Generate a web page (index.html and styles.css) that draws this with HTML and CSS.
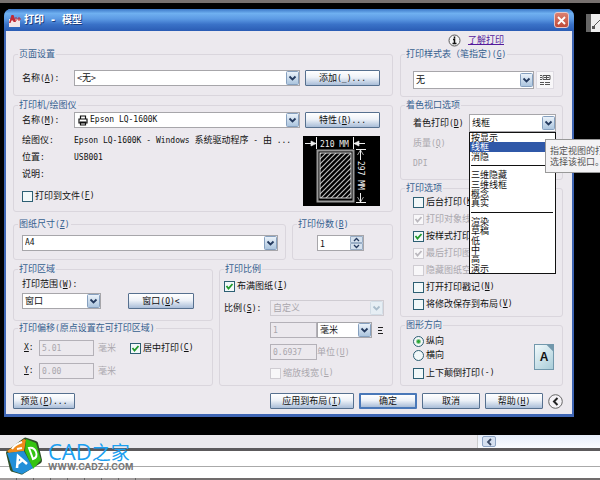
FILE: index.html
```
<!DOCTYPE html>
<html lang="zh-CN">
<head>
<meta charset="utf-8">
<title>打印 - 模型</title>
<link rel="stylesheet" href="styles.css">
</head>
<body>
<main class="canvas">
  <section class="dialog" aria-label="打印">
    <header class="titlebar">
      <svg class="app-icon" width="13" height="13" viewBox="0 0 13 13" aria-hidden="true">
        <path d="M1 5h11v8H1z" fill="#f4e6e8"/>
        <path d="M1 9 3.500 1h2L8 8H5.500L5 6.500H3.500L2.500 9z" fill="#c22a35"/>
        <path d="M7 4h2M7 6h2M10 4h2v2h-2z" stroke="#c22a35" fill="none"/>
      </svg>
      <h1>打印 - 模型</h1>
      <button class="close" aria-label="关闭"><svg width="9" height="9" viewBox="0 0 9 9"><path d="M1 1l7 7M8 1 1 8" stroke="#fff" stroke-width="1.800"/></svg></button>
    </header>
    <div class="body">
      <div class="help">
        <svg width="13" height="13" viewBox="0 0 13 13" aria-hidden="true"><circle cx="6.500" cy="6.500" r="5.500" fill="#f4f4f6" stroke="#555"/><path d="M6.500 2.500v2M5 5.500h1.500v4M4.500 9.500h4" stroke="#111" stroke-width="1.500" fill="none"/></svg>
        <a href="#">了解打印</a>
      </div>
      <div class="columns">
        <div class="left">
          <fieldset class="page-setup">
            <legend>页面设置</legend>
            <div class="line">
              <label class="cap" for="setup">名称<span class="m">(<u>A</u>):</span></label>
              <select id="setup" class="grow"><option>&lt;无&gt;</option></select>
              <button class="side">添加<span class="m">(_)...</span></button>
            </div>
          </fieldset>

          <fieldset class="printer">
            <legend>打印机/绘图仪</legend>
            <div class="line">
              <label class="cap" for="device">名称<span class="m">(<u>M</u>):</span></label>
              <select id="device" class="grow device"><option>Epson LQ-1600K</option></select>
              <button class="side">特性<span class="m">(<u>R</u>)...</span></button>
            </div>
            <div class="printer-info">
              <div>
                <dl>
                  <dt>绘图仪<span class="m">:</span></dt><dd><span class="m">Epson LQ-1600K - Windows </span>系统驱动程序<span class="m"> - </span>由<span class="m"> ...</span></dd>
                  <dt>位置<span class="m">:</span></dt><dd><span class="m">USB001</span></dd>
                  <dt>说明<span class="m">:</span></dt><dd></dd>
                </dl>
                <label class="check"><input type="checkbox">打印到文件<span class="m">(<u>F</u>)</span></label>
              </div>
              <svg class="preview" width="77" height="70" viewBox="0 0 77 70" role="img" aria-label="210 MM x 297 MM">
                <defs><pattern id="hatch" width="5" height="5" patternUnits="userSpaceOnUse"><path d="M-1 6 6-1M-1 1 1-1M4 6 6 4" stroke="#bbb" stroke-width="1.200"/></pattern></defs>
                <rect width="77" height="70" fill="#000"/>
                <rect x="14.500" y="14.500" width="36" height="51" fill="#000" stroke="#999" stroke-width="2"/>
                <rect x="17" y="17" width="31" height="45" fill="url(#hatch)" stroke="#ddd"/>
                <path d="M13.500 1v12M50.500 1v12M2 7.500h11M51 7.500h11M53 13.500h10M53 66.500h10M57.500 14v10M57.500 57v9" stroke="#eee" fill="none"/>
                <path d="M13 7.500 8 5v5zM51 7.500 56 5v5zM57.500 14l-3 5M57.500 14l3 5M57.500 66l-3-5M57.500 66l3-5" fill="#eee" stroke="#eee" stroke-width=".7"/>
                <text x="17" y="11">210 MM</text>
                <text transform="translate(55 25) rotate(90)" x="0" y="0">297 MM</text>
              </svg>
            </div>
          </fieldset>

          <div class="pair paper-row">
            <fieldset class="grow">
              <legend>图纸尺寸<span class="m">(<u>Z</u>)</span></legend>
              <div class="line"><select class="grow mono" aria-label="图纸尺寸"><option>A4</option></select></div>
            </fieldset>
            <fieldset class="copies">
              <legend>打印份数<span class="m">(<u>B</u>)</span></legend>
              <input type="number" value="1" aria-label="打印份数">
            </fieldset>
          </div>

          <div class="pair area-row">
            <div class="stack grow">
              <fieldset class="area">
                <legend>打印区域</legend>
                <label class="row-label" for="range">打印范围<span class="m">(<u>W</u>):</span></label>
                <div class="line split">
                  <select id="range" class="range"><option>窗口</option></select>
                  <button class="pick">窗口<span class="m">(<u>O</u>)&lt;</span></button>
                </div>
              </fieldset>
              <fieldset class="offset">
                <legend>打印偏移<span class="m">(</span>原点设置在可打印区域<span class="m">)</span></legend>
                <div class="line">
                  <label class="axis m" for="ox"><u>X</u>:</label><input id="ox" class="num" value="5.01" disabled>
                  <span class="unit off">毫米</span>
                  <label class="check"><input type="checkbox" checked>居中打印<span class="m">(<u>C</u>)</span></label>
                </div>
                <div class="line">
                  <label class="axis m" for="oy"><u>Y</u>:</label><input id="oy" class="num" value="0.00" disabled>
                  <span class="unit off">毫米</span>
                </div>
              </fieldset>
            </div>
            <fieldset class="scale">
              <legend>打印比例</legend>
              <label class="check"><input type="checkbox" checked>布满图纸<span class="m">(<u>I</u>)</span></label>
              <div class="scale-grid">
                <label for="ratio">比例<span class="m">(<u>S</u>):</span></label>
                <select id="ratio" class="wide" disabled><option>自定义</option></select>
                <input class="num c2" value="1" aria-label="图纸单位" disabled>
                <span class="line"><select class="mm" aria-label="单位"><option>毫米</option></select><svg width="7" height="9" viewBox="0 0 7 9" aria-hidden="true"><path d="M1 1.500h5M1 4.500h4M1 7.500h5" stroke="#222"/></svg></span>
                <input id="du" class="num c2" value="0.6937" disabled>
                <label class="off" for="du">单位<span class="m">(<u>U</u>)</span></label>
                <label class="check off c2 span"><input type="checkbox" disabled>缩放线宽<span class="m">(<u>L</u>)</span></label>
              </div>
            </fieldset>
          </div>
        </div>

        <div class="right">
          <fieldset class="styles">
            <legend>打印样式表（笔指定<span class="m">)(<u>G</u>)</span></legend>
            <div class="line">
              <select class="grow tall" aria-label="打印样式表"><option>无</option></select>
              <button class="edit" aria-label="编辑"><svg width="12" height="12" viewBox="0 0 12 12"><path d="M1 1.500h2M4 1.500h7v4H4zM1 3.500h2M5 3.500h5M1 5.500h2M1 8.500h4M6 8.500h5M1 10.500h4M6 10.500h5M7.500 1v5" stroke="#555" fill="none"/></svg></button>
            </div>
          </fieldset>

          <fieldset class="shade">
            <legend>着色视口选项</legend>
            <div class="shade-grid">
              <label for="shadeplot">着色打印<span class="m">(<u>D</u>)</span></label>
              <div class="picker">
                <select id="shadeplot" class="tall"><option>线框</option></select>
                <ul class="menu">
                  <li>按显示</li><li class="sel">线框</li><li>消隐</li><li class="sep"></li>
                  <li>三维隐藏</li><li>三维线框</li><li>概念</li><li>真实</li><li class="sep"></li>
                  <li>渲染</li><li>草稿</li><li>低</li><li>中</li><li>高</li><li>演示</li>
                </ul>
              </div>
              <span class="off">质量<span class="m">(<u>Q</u>)</span></span>
              <span class="off m">DPI</span>
            </div>
          </fieldset>

          <fieldset class="options">
            <legend>打印选项</legend>
            <div class="option-list">
              <label class="check"><input type="checkbox">后台打印<span class="m">(<u>K</u>)</span></label>
              <label class="check off"><input type="checkbox" checked disabled>打印对象线宽</label>
              <label class="check"><input type="checkbox" checked>按样式打印<span class="m">(<u>E</u>)</span></label>
              <label class="check off"><input type="checkbox" checked disabled>最后打印图纸空间</label>
              <label class="check off"><input type="checkbox" disabled>隐藏图纸空间对象<span class="m">(<u>J</u>)</span></label>
              <label class="check"><input type="checkbox">打开打印戳记<span class="m">(<u>N</u>)</span></label>
              <label class="check"><input type="checkbox">将修改保存到布局<span class="m">(<u>V</u>)</span></label>
            </div>
          </fieldset>

          <fieldset class="orient">
            <legend>图形方向</legend>
            <div class="line split">
              <div>
                <label class="check"><input type="radio" name="o" checked>纵向</label>
                <label class="check"><input type="radio" name="o">横向</label>
                <label class="check flip"><input type="checkbox">上下颠倒打印<span class="m">(-)</span></label>
              </div>
              <div class="sheet">A</div>
            </div>
          </fieldset>
        </div>
      </div>

      <footer class="actions">
        <button class="w62">预览<span class="m">(<u>P</u>)...</span></button>
        <span class="grow"></span>
        <button class="w84">应用到布局<span class="m">(<u>T</u>)</span></button>
        <button class="w58 main">确定</button>
        <button class="w58">取消</button>
        <button class="w58">帮助<span class="m">(<u>H</u>)</span></button>
        <button class="less" aria-label="收起"><svg width="15" height="15" viewBox="0 0 15 15"><circle cx="7.500" cy="7.500" r="6.800" fill="#f4f2f6" stroke="#666"/><path d="M9.500 4 6 7.500 9.500 11" stroke="#222" stroke-width="2" fill="none"/></svg></button>
      </footer>
    </div>
  </section>
  <div class="tooltip">指定视图的打<br>选择该视口。</div>
  <div class="palette"><svg width="9" height="18" viewBox="0 0 9 18" aria-hidden="true"><path d="M1 14 9 6" stroke="#555"/><rect x="1" y="12" width="3" height="3" fill="#555"/></svg></div>
</main>

<div class="scroll">
  <span class="tabs"></span>
  <div class="track"><button aria-label="向左"><svg width="7" height="8" viewBox="0 0 7 8"><path d="M5 1 2 4l3 3" stroke="#3b4a66" stroke-width="1.800" fill="none"/></svg></button></div>
</div>
<div class="history"></div>
<div class="command"></div>
<div class="status"></div>

<div class="brand">
  <svg width="38" height="39" viewBox="0 0 38 39" aria-hidden="true">
    <path d="M1 16Q1 14 3 13L19 1q1-1 3 0l9 3q2 1 2 2l4 17q0 2-1 3L18 37q-1 1-3 0L8 35q-2 0-3-2z" fill="#2f4f2a"/>
    <path d="M2 14 19 2l2 1-2 11L4 16z" fill="#f08a1c"/>
    <path d="M21 2l10 4 5 17-8 9-8-18z" fill="#35c412"/>
    <path d="M2 16l17-2 9 17-11 6-9-3z" fill="#218fd8"/>
    <path d="M17 5q-8 3-10 7M17 11l-5 1" stroke="#fff" stroke-width="2" fill="none"/>
    <path d="M24 11l4 11q5-2 3-7-2-5-7-4z" stroke="#fff" stroke-width="2" fill="none"/>
    <path d="M12 31l1-12 9 8M12.500 27l5-4" stroke="#fff" stroke-width="2.500" fill="none"/>
  </svg>
  <div><div class="name">CAD<span>之家</span></div><div class="url">WWW.CADZJ.COM</div></div>
</div>
</body>
</html>
```
FILE: styles.css
```
* { box-sizing: border-box; }

body {
  margin: 0;
  min-height: 100vh;
  display: flex;
  flex-direction: column;
  position: relative;
  overflow: hidden;
  background: #fff;
  color: #111;
  font: 9px/14px "Noto Sans CJK SC", sans-serif;
}

button, select, input { font: inherit; color: inherit; margin: 0; }
button { padding: 0; }
.m, .mono, .num { font-family: "DejaVu Sans Mono", "Noto Sans CJK SC", monospace; font-size: 8px; }
.grow { flex: 1; min-width: 0; }
.line { display: flex; align-items: center; }
.split { justify-content: space-between; }

/* Drawing area */
.canvas {
  flex: 1;
  position: relative;
  background: #000;
  border-top: 3px solid #77716f;
  padding: 6px 26px 18px 4px;
}

.dialog {
  background: #ece9ee;
  border: solid #3f66b4;
  border-width: 0 2px 3px;
  border-radius: 7px 7px 0 0;
}

.titlebar {
  display: flex;
  align-items: center;
  gap: 3px;
  height: 22px;
  margin: 0 -2px;
  padding: 0 5px 0 4px;
  border-radius: 7px 7px 0 0;
  background: linear-gradient(#3c78c8, #6fb0f0 20%, #5c9ae4 45%, #3a72c8 70%, #2a5cb4);
}
.titlebar h1 {
  flex: 1;
  margin: 0;
  color: #fff;
  font: bold 10px/20px "DejaVu Sans Mono", "Noto Sans CJK SC", monospace;
  text-shadow: 1px 1px #1c3f80;
}
.close {
  display: grid;
  place-items: center;
  width: 15px;
  height: 16px;
  border: 1px solid #e8c8c8;
  border-radius: 3px;
  background: linear-gradient(#dd8070, #c04a38);
}

.body { padding: 0 9px 5px 7px; }

.help {
  display: flex;
  align-items: center;
  justify-content: flex-end;
  gap: 7px;
  height: 16px;
  padding: 2px 59px 0 0;
}
.help a { color: #551a9b; }

.columns { display: flex; gap: 7px; }
.left { flex: 1; min-width: 0; display: flex; flex-direction: column; gap: 2px; }
.right { width: 163px; display: flex; flex-direction: column; gap: 1px; }
.stack { display: flex; flex-direction: column; }
.pair { display: flex; gap: 6px; }

/* Groups */
fieldset {
  min-width: 0;
  margin: 0;
  padding: 0 12px 0 8px;
  border: 1px solid #dad6dd;
  border-radius: 3px;
}
legend { margin-left: -4px; padding: 0 1px; color: #35608f; white-space: nowrap; }

.page-setup { padding-top: 9px; padding-bottom: 9px; }
.cap { width: 52px; }

select, .num, .copies input {
  appearance: none;
  min-width: 0;
  height: 16px;
  padding: 0 14px 0 2px;
  border: 1px solid #a7a6aa;
  border-radius: 0;
  outline: 0;
  background: #fff;
  line-height: 14px;
}
select {
  background: url("data:image/svg+xml,%3Csvg xmlns='http://www.w3.org/2000/svg' viewBox='0 0 13 14'%3E%3Cdefs%3E%3ClinearGradient id='g' x2='0' y2='1'%3E%3Cstop stop-color='%23edf4fb'/%3E%3Cstop offset='1' stop-color='%23a9c3dd'/%3E%3C/linearGradient%3E%3C/defs%3E%3Crect x='.5' y='.5' width='12' height='13' rx='1' fill='url(%23g)' stroke='%2386a0bf'/%3E%3Cpath d='M3.500 5.500l3 3 3-3' fill='none' stroke='%23243a5e' stroke-width='1.800'/%3E%3C/svg%3E") right 0 center / 13px 14px no-repeat #fff;
}
select.tall { height: 18px; }
select:disabled {
  color: #a9a6ac;
  border-color: #cfccd2;
  opacity: 1;
  background-color: #ece9ee;
  background-image: url("data:image/svg+xml,%3Csvg xmlns='http://www.w3.org/2000/svg' viewBox='0 0 13 14'%3E%3Crect x='.5' y='.5' width='12' height='13' rx='1' fill='%23e6eef4' stroke='%23d2dde6'/%3E%3Cpath d='M3.500 5.500l3 3 3-3' fill='none' stroke='%23a9bccb' stroke-width='1.800'/%3E%3C/svg%3E");
}
.num { padding: 0 2px; }
.num:disabled { background: #ece9ee; color: #a9a6ac; border-color: #b4b1b8; }

.side, .pick, .actions button {
  height: 16px;
  border: 1px solid #56708f;
  border-radius: 1px;
  background: linear-gradient(#fff, #eef2f8 45%, #a9bdd8);
  line-height: 12px;
  white-space: nowrap;
}
.side { width: 75px; margin-left: 5px; }

.off { color: #aaa7ad; }

/* Tick boxes */
.check { display: flex; align-items: center; height: 14px; white-space: nowrap; }
.check input {
  appearance: none;
  flex: none;
  width: 11px;
  height: 11px;
  margin-right: 2px;
  border: 1px solid #2d5f73;
  background: center / 9px 9px no-repeat #f2f8f9;
}
.check input:disabled { border-color: #cfccd2; background-color: #f8f7f9; }
.check input[type=checkbox]:checked {
  background-image: url("data:image/svg+xml,%3Csvg xmlns='http://www.w3.org/2000/svg' viewBox='0 0 9 9'%3E%3Cpath d='M1.500 4l2 2.500 4-4.500' fill='none' stroke='%23219a2b' stroke-width='1.800'/%3E%3C/svg%3E");
}
.check input[type=checkbox]:checked:disabled {
  background-image: url("data:image/svg+xml,%3Csvg xmlns='http://www.w3.org/2000/svg' viewBox='0 0 9 9'%3E%3Cpath d='M1.500 4l2 2.500 4-4.500' fill='none' stroke='%23bbb8be' stroke-width='1.800'/%3E%3C/svg%3E");
}
.check input[type=radio] { border-radius: 50%; }
.check input[type=radio]:checked { background: radial-gradient(circle, #2ba436 0 1px, #f4f8f8 3px); }

/* Printer */
.printer { padding-bottom: 5px; }
select.device {
  padding-left: 15px;
  font-family: "DejaVu Sans Mono", monospace;
  font-size: 8px;
  background-image: url("data:image/svg+xml,%3Csvg xmlns='http://www.w3.org/2000/svg' viewBox='0 0 10 11'%3E%3Cpath d='M2.500 4V1h5v3M1 4h8v4H1zM2.500 7h5v3h-5z' fill='none' stroke='%23111' stroke-width='1.200'/%3E%3C/svg%3E"), url("data:image/svg+xml,%3Csvg xmlns='http://www.w3.org/2000/svg' viewBox='0 0 13 14'%3E%3Cdefs%3E%3ClinearGradient id='g' x2='0' y2='1'%3E%3Cstop stop-color='%23edf4fb'/%3E%3Cstop offset='1' stop-color='%23a9c3dd'/%3E%3C/linearGradient%3E%3C/defs%3E%3Crect x='.5' y='.5' width='12' height='13' rx='1' fill='url(%23g)' stroke='%2386a0bf'/%3E%3Cpath d='M3.500 5.500l3 3 3-3' fill='none' stroke='%23243a5e' stroke-width='1.800'/%3E%3C/svg%3E");
  background-position: 3px center, right 0 center;
  background-size: 10px 11px, 13px 14px;
}
.printer-info { display: flex; justify-content: space-between; padding-top: 4px; }
.printer-info > div { min-width: 0; }
dl { display: grid; grid-template-columns: 52px auto; grid-auto-rows: 17px; align-items: center; margin: 0 0 6px; white-space: nowrap; }
dd { margin: 0; }
.preview { flex: none; margin-top: 4px; }
.preview text { fill: #eee; font: 8px "DejaVu Sans Mono", monospace; }

.paper-row { padding-top: 3px; }
.paper-row fieldset { padding: 3px 7px 8px 8px; }
.copies { width: 101px; }
.paper-row .copies { padding-left: 24px; padding-right: 28px; }
.copies legend { margin-left: -20px; }
.copies input {
  display: block;
  width: 100%;
  background: url("data:image/svg+xml,%3Csvg xmlns='http://www.w3.org/2000/svg' viewBox='0 0 13 14'%3E%3Cpath d='M.5 .5h12v6H.5zM.5 7.500h12v6H.5z' fill='%23d5e1ee' stroke='%2399aec6'/%3E%3Cpath d='M4 5l2.500-2.500L9 5M4 9l2.500 2.500L9 9' fill='none' stroke='%23243a5e' stroke-width='1.300'/%3E%3C/svg%3E") right 0 center / 13px 14px no-repeat #fff;
}
.copies input::-webkit-inner-spin-button { appearance: none; }

/* Plot area, offset, scale */
.area { padding-bottom: 11px; }
.area .row-label { display: block; height: 17px; line-height: 16px; }
.range { width: 79px; }
.pick { width: 66px; margin-right: 6px; }
.offset { padding: 4px 8px 6px; }
.offset .line + .line { margin-top: 7px; }
.axis { width: 17px; padding-left: 2px; }
.offset .num { width: 55px; }
.unit { padding: 0 14px 0 4px; }

.scale { width: 174px; padding: 3px 8px 0 4px; }
.scale legend { margin-left: 0; }
.scale-grid { display: grid; grid-template-columns: 46px 47px 1fr; row-gap: 6px; align-items: center; padding-top: 7px; }
.scale-grid .wide { grid-column: 2 / 4; }
.c2 { grid-column: 2; }
.c2.span { grid-column: 2 / 4; }
.scale-grid .line { gap: 5px; }
.mm { width: 55px; }

/* Right-hand groups */
.right fieldset { padding-left: 12px; padding-right: 8px; }
.right legend { margin-left: -8px; }
.right .styles { padding-top: 9px; padding-bottom: 7px; }
.edit {
  display: grid;
  place-items: center;
  width: 18px;
  height: 18px;
  margin-left: 2px;
  border: 1px solid #dedbe2;
  background: #f8f7f9;
}

.right .shade { padding: 2px 6px 5px 12px; }
.shade-grid { display: grid; grid-template-columns: 56px 1fr; grid-template-rows: 18px 22px 20px; align-items: center; white-space: nowrap; }
.shade-grid > .off { grid-column: 1; }
.picker { position: relative; }
.picker select { display: block; width: 100%; }
.menu {
  position: absolute;
  z-index: 2;
  top: 100%;
  left: 0;
  right: 0;
  display: flex;
  flex-direction: column;
  height: 142px;
  margin: 0;
  padding: 0;
  border: 1px solid #111;
  background: #fff;
  color: #111;
  list-style: none;
  line-height: 9px;
}
.menu li { flex: 1; padding-left: 1px; }
.menu .sel { background: #2f58a8; color: #fff; }
.menu .sep::before { content: ""; display: block; margin: 4px 2px 0 0; border-top: 1px solid #111; }

.options { flex: 1; display: flex; flex-direction: column; }
.option-list { flex: 1; display: flex; flex-direction: column; justify-content: space-between; height: 100%; padding-bottom: 5px; }
.orient .flip { margin-top: 4px; }
.right .orient { padding-top: 2px; padding-bottom: 5px; }
.sheet {
  width: 20px;
  height: 26px;
  border: 1px solid #7298ac;
  background: linear-gradient(225deg, #7298ac 4px, transparent 5px), linear-gradient(135deg, #f2fafc, #a8ccd8);
  font: bold 12px/25px "Liberation Sans", sans-serif;
  text-align: center;
}

.actions { display: flex; align-items: center; gap: 5px; padding-top: 7px; }
.w62 { width: 62px; }
.w84 { width: 84px; }
.w58 { width: 58px; }
.actions .main { border: 2px solid #4a78b8; line-height: 10px; }
.actions .less { border: 0; background: none; height: 15px; width: 15px; }
.less svg, .close svg { display: block; }

/* Over the drawing area */
.tooltip {
  position: absolute;
  z-index: 3;
  top: 136px;
  left: calc(100% - 55px);
  padding: 5px 4px;
  border: 1px solid #999;
  background: #f3f2f4;
  color: #555;
  line-height: 11px;
  white-space: nowrap;
}
.palette {
  position: absolute;
  top: 11px;
  right: 0;
  height: 18px;
  border-left: 5px solid #666;
  background: #eee;
}
.palette svg { display: block; }

/* Bottom bars */
.scroll { display: flex; height: 13px; background: #ebe9ed; }
.tabs { flex: 1; }
.track { width: 123px; padding: 1px 0 0 4px; border-left: 1px solid #ccc; background: linear-gradient(#e6edfa, #fafcff); }
.track button { display: grid; place-items: center; width: 14px; height: 11px; border: 1px solid #8fa5c4; border-radius: 2px; background: #d5e0f0; }
.history { height: 19px; border-top: 3px solid #5c5a5c; border-bottom: 1px solid #aaa; background: #fff; }
.command { height: 11px; background: #fff; }
.status { height: 2px; background: repeating-linear-gradient(90deg, #a09c9c 0 16px, #666 16px 17px) left / 150px 2px no-repeat, #706c6c; }

.brand { position: absolute; left: 5px; bottom: 4px; display: flex; align-items: center; gap: 5px; white-space: nowrap; }
.brand svg { flex: none; }
.name { color: #1b9ff0; font: 22px/21px "Open Sans", sans-serif; }
.name span { font: 19px/21px "Noto Sans CJK SC", sans-serif; }
.url { color: #777; font: bold 9px/10px Inter, sans-serif; }
```
